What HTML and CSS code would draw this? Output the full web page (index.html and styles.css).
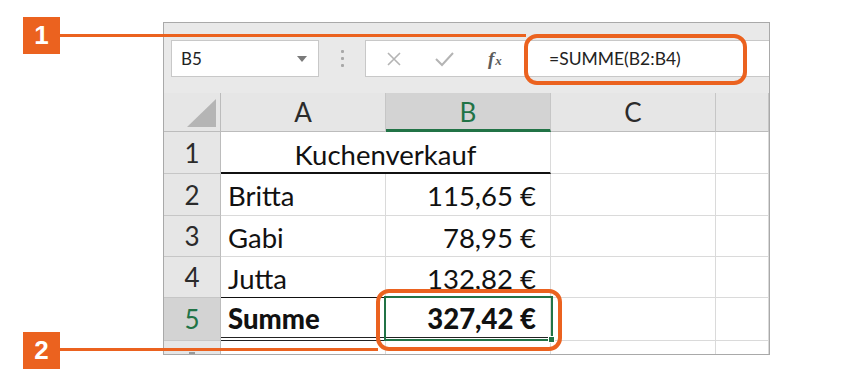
FILE: index.html
```html
<!DOCTYPE html>
<html lang="de">
<head>
<meta charset="utf-8">
<title>SUMME</title>
<link rel="stylesheet" href="styles.css">
</head>
<body>
<div class="page">
  <div class="sheet">
    <div class="toolbar">
      <div class="namebox">
        <span class="nb-text">B5</span>
        <svg class="caret" width="10" height="6" viewBox="0 0 10 6"><path d="M0 0H10L5 6Z" fill="#7a7a7a"/></svg>
      </div>
      <div class="dots"><i></i><i></i><i></i></div>
      <div class="formula">
        <div class="fbtns">
          <svg class="ic" width="16" height="16" viewBox="0 0 16 16"><path d="M2 2L14 14M14 2L2 14" stroke="#b4b4b4" stroke-width="1.6" fill="none"/></svg>
          <svg class="ic" width="20" height="16" viewBox="0 0 20 16"><path d="M2 8L8 14L19 2" stroke="#b4b4b4" stroke-width="2" fill="none"/></svg>
          <span class="fx">f<sub>x</sub></span>
        </div>
        <div class="finput">=SUMME(B2:B4)</div>
      </div>
    </div>
    <div class="grid">
      <div class="corner"><span class="tri"></span></div>
      <div class="ch">A</div>
      <div class="ch sel">B</div>
      <div class="ch">C</div>
      <div class="ch"></div>

      <div class="rh">1</div>
      <div class="c merged bb2">Kuchenverkauf</div>
      <div class="c"></div>
      <div class="c"></div>

      <div class="rh">2</div>
      <div class="c">Britta</div>
      <div class="c num">115,65 €</div>
      <div class="c"></div>
      <div class="c"></div>

      <div class="rh">3</div>
      <div class="c">Gabi</div>
      <div class="c num">78,95 €</div>
      <div class="c"></div>
      <div class="c"></div>

      <div class="rh">4</div>
      <div class="c bbk">Jutta</div>
      <div class="c num bbk">132,82 €</div>
      <div class="c"></div>
      <div class="c"></div>

      <div class="rh rsel">5</div>
      <div class="c bold dbl">Summe</div>
      <div class="c num bold dbl active">327,42 €<span class="handle"></span></div>
      <div class="c"></div>
      <div class="c"></div>

      <div class="rh last"><span class="nub"></span></div>
      <div class="c last"></div>
      <div class="c last"></div>
      <div class="c last"></div>
      <div class="c last"></div>
    </div>
  </div>

  <div class="badge b1">1</div>
  <div class="line l1"></div>
  <div class="ring r1"></div>

  <div class="badge b2">2</div>
  <div class="line l2"></div>
  <div class="ring r2"></div>
</div>
</body>
</html>
```

FILE: styles.css
```css
* { box-sizing: border-box; }
html, body { margin: 0; padding: 0; background: #fff; }
body { width: 850px; height: 389px; overflow: hidden; font-family: Lato, "Open Sans", sans-serif; }

.page { position: relative; width: 850px; height: 389px; padding: 22px 0 0 163px; }

.sheet {
  width: 607px; height: 333px;
  border: 1px solid #a9a9a9;
  background: #fff;
  overflow: hidden;
}

.toolbar {
  height: 70px;
  background: #e9e9e9;
  display: flex;
  align-items: flex-start;
  padding: 17px 0 0 7px;
}
.namebox {
  width: 148px; height: 37px;
  background: #fff;
  border: 1px solid #c8c8c8;
  display: flex; align-items: center; justify-content: space-between;
  padding: 0 11px 0 9px;
  font-size: 17px; color: #222;
}
.caret { margin-top: 1px; }
.dots {
  width: 46px; height: 37px;
  display: flex; flex-direction: column; align-items: center; justify-content: center; gap: 4px;
}
.dots i { display: block; width: 3px; height: 3px; background: #a8a8a8; border-radius: 1px; }

.formula {
  flex: 1; height: 37px;
  background: #fff;
  border: 1px solid #c8c8c8;
  border-right: none;
  display: flex; align-items: center;
}
.fbtns { width: 162px; display: flex; align-items: center; padding-left: 20px; }
.fbtns .ic:nth-child(1) { margin-right: 32px; }
.fbtns .ic:nth-child(2) { margin-right: 34px; }
.fx { font-family: "Liberation Serif", serif; font-style: italic; font-size: 19px; color: #5c5c5c; font-weight: bold; }
.fx sub { font-size: 13px; vertical-align: 0; margin-left: 1px; }
.finput { padding-left: 21px; font-size: 17.5px; color: #222; }

.grid {
  display: grid;
  grid-template-columns: 57px 165px 165px 165px 53px;
  grid-template-rows: 39px 42px 42px 41px 41px 43px 14px;
  font-size: 27.5px;
  color: #111;
}
.corner {
  background: #e6e6e6;
  border-right: 1px solid #bcbcbc;
  border-bottom: 1px solid #bcbcbc;
  position: relative;
}
.tri {
  position: absolute; right: 4px; bottom: 4px;
  width: 0; height: 0;
  border-left: 29px solid transparent;
  border-bottom: 28px solid #b5b5b5;
}
.ch {
  background: #e6e6e6;
  border-right: 1px solid #c6c6c6;
  border-bottom: 1px solid #bcbcbc;
  display: flex; align-items: center; justify-content: center;
  color: #2b2b2b; font-size: 26px;
}
.ch.sel { background: #d3d3d3; color: #217346; border-bottom: 3px solid #217346; padding-top: 2px; }
.rh {
  background: #e6e6e6;
  border-right: 1px solid #bcbcbc;
  border-bottom: 1px solid #c6c6c6;
  display: flex; align-items: center; justify-content: center;
  color: #2b2b2b; font-size: 26px;
}
.rh.rsel { background: #d3d3d3; color: #217346; }
.rh.last { align-items: flex-end; }
.nub { display: block; width: 6px; height: 2px; background: #9a9a9a; }

.c {
  border-right: 1px solid #dadada;
  border-bottom: 1px solid #dadada;
  display: flex; align-items: center;
  padding: 2px 7px 0 7px;
  white-space: nowrap;
  position: relative;
}
.c.merged { grid-column: span 2; justify-content: center; padding-top: 4px; }
.c.bb2 { border-bottom: 2px solid #111; }
.c.bbk { border-bottom: 1px solid #111; }
.c.num { justify-content: flex-end; padding-right: 14px; }
.c.bold { font-weight: 900; }
.c.dbl { border-bottom: 4px double #222; }
.c.active::after {
  content: "";
  position: absolute; left: -2px; top: -2px; right: -3px; bottom: -4px;
  border: 2px solid #217346;
}
.handle {
  position: absolute; right: -5px; bottom: -6px;
  width: 7px; height: 7px;
  background: #217346; border: 1px solid #fff;
  z-index: 2;
}

.badge {
  position: absolute; left: 23px;
  width: 37px; height: 37px;
  background: #eb621f; color: #fff;
  font-family: "Liberation Sans", Arial, sans-serif; font-weight: bold; font-size: 26px;
  display: flex; align-items: center; justify-content: center;
}
.b1 { top: 17px; }
.b2 { top: 332px; }
.line { position: absolute; left: 60px; height: 3px; background: #eb621f; }
.l1 { top: 34px; width: 466px; }
.l2 { top: 348px; width: 318px; }
.ring { position: absolute; border: 4px solid #eb621f; border-radius: 13px; }
.r1 { left: 524px; top: 34px; width: 223px; height: 51px; }
.r2 { left: 376px; top: 289px; width: 186px; height: 62px; }
```
